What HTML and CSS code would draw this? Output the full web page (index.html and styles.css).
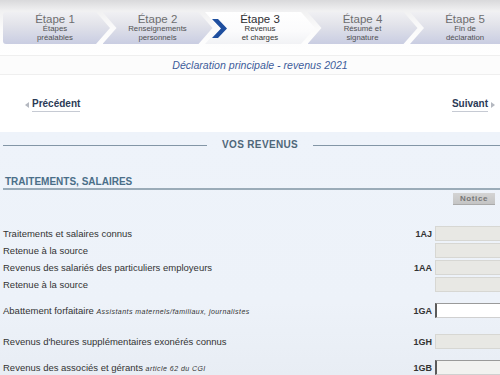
FILE: index.html
```html
<!DOCTYPE html>
<html lang="fr">
<head>
<meta charset="utf-8">
<title>Déclaration principale - revenus 2021</title>
<link rel="stylesheet" href="styles.css">
</head>
<body>
<div class="page">
  <div class="stepbar">
    <div class="steps">
      <div class="step first">
        <div class="step-text">
          <div class="step-title">Étape 1</div>
          <div class="step-sub">Étapes<br>préalables</div>
        </div>
      </div>
      <div class="step">
        <div class="step-text">
          <div class="step-title">Étape 2</div>
          <div class="step-sub">Renseignements<br>personnels</div>
        </div>
      </div>
      <div class="step active">
        <svg class="step-arrow" width="15" height="19" viewBox="0 0 15 19"><polygon points="0,0 6,0 15,9.5 6,19 0,19 9,9.5" fill="#1f4f9f"/></svg>
        <div class="step-text">
          <div class="step-title">Étape 3</div>
          <div class="step-sub">Revenus<br>et charges</div>
        </div>
      </div>
      <div class="step">
        <div class="step-text">
          <div class="step-title">Étape 4</div>
          <div class="step-sub">Résumé et<br>signature</div>
        </div>
      </div>
      <div class="step">
        <div class="step-text">
          <div class="step-title">Étape 5</div>
          <div class="step-sub">Fin de<br>déclaration</div>
        </div>
      </div>
    </div>
  </div>

  <div class="subtitle">Déclaration principale - revenus 2021</div>

  <div class="nav">
    <a class="nav-link prev" href="#"><svg class="tri" width="4" height="6" viewBox="0 0 4 6"><polygon points="4,0 0,3 4,6" fill="#b4b8c0"/></svg><span>Précédent</span></a>
    <a class="nav-link next" href="#"><span>Suivant</span><svg class="tri" width="4" height="6" viewBox="0 0 4 6"><polygon points="0,0 4,3 0,6" fill="#b4b8c0"/></svg></a>
  </div>

  <div class="panel">
    <div class="section-title"><span>VOS REVENUS</span></div>
    <div class="group-title">TRAITEMENTS, SALAIRES</div>
    <div class="notice-row"><button class="notice">Notice</button></div>

    <div class="rows">
      <div class="row">
        <div class="label">Traitements et salaires connus</div>
        <div class="code">1AJ</div>
        <div class="box ro"></div>
      </div>
      <div class="row">
        <div class="label">Retenue à la source</div>
        <div class="code"></div>
        <div class="box ro"></div>
      </div>
      <div class="row">
        <div class="label">Revenus des salariés des particuliers employeurs</div>
        <div class="code">1AA</div>
        <div class="box ro"></div>
      </div>
      <div class="row">
        <div class="label">Retenue à la source</div>
        <div class="code"></div>
        <div class="box ro"></div>
      </div>
    </div>

    <div class="rows r-ga">
      <div class="row">
        <div class="label">Abattement forfaitaire <i class="note">Assistants maternels/familiaux, journalistes</i></div>
        <div class="code">1GA</div>
        <div class="box edit"></div>
      </div>
    </div>

    <div class="rows r-gh">
      <div class="row">
        <div class="label">Revenus d'heures supplémentaires exonérés connus</div>
        <div class="code">1GH</div>
        <div class="box ro"></div>
      </div>
    </div>

    <div class="rows r-gb">
      <div class="row">
        <div class="label">Revenus des associés et gérants <i class="note">article 62 du CGI</i></div>
        <div class="code">1GB</div>
        <div class="box edit light"></div>
      </div>
    </div>
  </div>
</div>
</body>
</html>
```

FILE: styles.css
```css
html, body {
  margin: 0;
  padding: 0;
}
body {
  width: 500px;
  height: 375px;
  overflow: hidden;
  background: #ffffff;
  font-family: "Liberation Sans", Arial, sans-serif;
  color: #333;
}
.page {
  width: 500px;
  height: 375px;
  overflow: hidden;
  display: flex;
  flex-direction: column;
}

/* Step bar */
.stepbar {
  height: 55px;
  box-sizing: border-box;
  padding-top: 12px;
  background: linear-gradient(to bottom, #d9d9db 0px, #f1f1f2 11px, #fbfbfb 30px, #ffffff 55px);
  overflow: hidden;
}
.steps {
  display: flex;
  padding-left: 3px;
  height: 32px;
}
.step {
  flex: 0 0 110px;
  width: 110px;
  height: 32px;
  margin-left: -7.5px;
  box-sizing: border-box;
  padding: 0 7px;
  background: linear-gradient(to bottom, #f0f0f3 0%, #e2e3ea 40%, #c9cde2 100%);
  clip-path: polygon(0 0, calc(100% - 14px) 0, 100% 50%, calc(100% - 14px) 100%, 0 100%, 14px 50%);
  display: flex;
  text-align: center;
}
.step.first {
  flex-basis: 107px;
  width: 107px;
  margin-left: 0;
  padding: 0 7px 0 4px;
  border-radius: 3px 0 0 3px;
  clip-path: polygon(0 0, calc(100% - 14px) 0, 100% 50%, calc(100% - 14px) 100%, 0 100%);
}
.step.active {
  background: linear-gradient(to bottom, #ffffff 0%, #fbfbfc 60%, #f1f2f5 100%);
  padding: 0 22px 0 7px;
  align-items: center;
}
.step-arrow {
  flex: 0 0 auto;
  display: block;
}
.step-text {
  flex: 1;
  padding-top: 2px;
}
.step-title {
  font-size: 11.5px;
  line-height: 11px;
  color: #6e6e70;
}
.step-sub {
  font-size: 7.8px;
  line-height: 8.5px;
  color: #505052;
}
.step.active .step-text {
  align-self: flex-start;
}
.step.active .step-title {
  color: #2f2f33;
}
.step.active .step-sub {
  color: #333;
}

/* Subtitle */
.subtitle {
  height: 20px;
  box-sizing: border-box;
  border-top: 1px solid #efefef;
  border-bottom: 1px solid #efefef;
  background: #fcfcfc;
  text-align: center;
  font-size: 10.6px;
  font-style: italic;
  line-height: 18px;
  color: #3e5c9b;
  padding-left: 20px;
}

/* Nav */
.nav {
  height: 57px;
  box-sizing: border-box;
  padding: 23px 5px 0 25px;
  display: flex;
  justify-content: space-between;
  align-items: flex-start;
}
.nav-link {
  display: flex;
  align-items: center;
  gap: 3px;
  text-decoration: none;
  font-size: 10px;
  font-weight: bold;
  color: #2b3a56;
  line-height: 12px;
}
.nav-link span {
  border-bottom: 1px solid #c6cad3;
  padding-bottom: 1px;
}
.tri {
  display: block;
  margin-top: -1px;
}

/* Panel */
.panel {
  flex: 1;
  background: linear-gradient(to bottom, #eef3fa 0%, #edf2f9 70%, #e8edf4 100%);
  padding: 7px 0 0 3px;
  overflow: hidden;
}
.section-title {
  display: grid;
  grid-template-columns: 204px auto 1fr;
  align-items: center;
  column-gap: 15px;
  height: 12px;
}
.section-title::before,
.section-title::after {
  content: "";
  height: 1px;
  background: #8396a6;
}
.section-title span {
  font-size: 10px;
  font-weight: bold;
  letter-spacing: 0.35px;
  color: #4f6779;
  line-height: 12px;
}
.group-title {
  margin-top: 25px;
  font-size: 10px;
  font-weight: bold;
  line-height: 12px;
  color: #4a6e88;
  padding-left: 2px;
  border-bottom: 2px solid #9aabb8;
}
.notice-row {
  display: flex;
  justify-content: flex-end;
  padding-top: 3px;
  padding-right: 5px;
}
.notice {
  width: 42px;
  height: 12px;
  padding: 0;
  border: none;
  background: linear-gradient(to bottom, #d4d4d4, #c4c4c4);
  border-bottom: 1px solid #aaa;
  font-family: "Liberation Sans", Arial, sans-serif;
  font-size: 8px;
  font-weight: bold;
  letter-spacing: 0.6px;
  color: #777;
  line-height: 11px;
}

.rows {
  width: 505px;
  display: flex;
  flex-direction: column;
  gap: 2px;
  margin-top: 21px;
}
.rows.r-ga { margin-top: 11px; }
.rows.r-gh { margin-top: 16px; }
.rows.r-gb { margin-top: 11px; }
.row {
  display: grid;
  grid-template-columns: 1fr 30px 73px;
  column-gap: 3px;
  align-items: center;
  height: 15px;
}
.label {
  font-size: 9.5px;
  color: #333;
  white-space: nowrap;
}
.note {
  font-size: 7px;
  letter-spacing: 0.45px;
  color: #333;
}
.code {
  text-align: right;
  font-size: 9px;
  font-weight: bold;
  color: #333;
}
.box {
  height: 15px;
  box-sizing: border-box;
}
.box.ro {
  background: #e8e8e4;
  border: 1px solid #d7d7d3;
}
.box.edit {
  background: #ffffff;
  border: 1px solid;
  border-color: #9a9a9a #d0d0d0 #d0d0d0 #5a5a5a;
  border-left-width: 2px;
}
.box.edit.light {
  background: #f2f2f0;
}
```
